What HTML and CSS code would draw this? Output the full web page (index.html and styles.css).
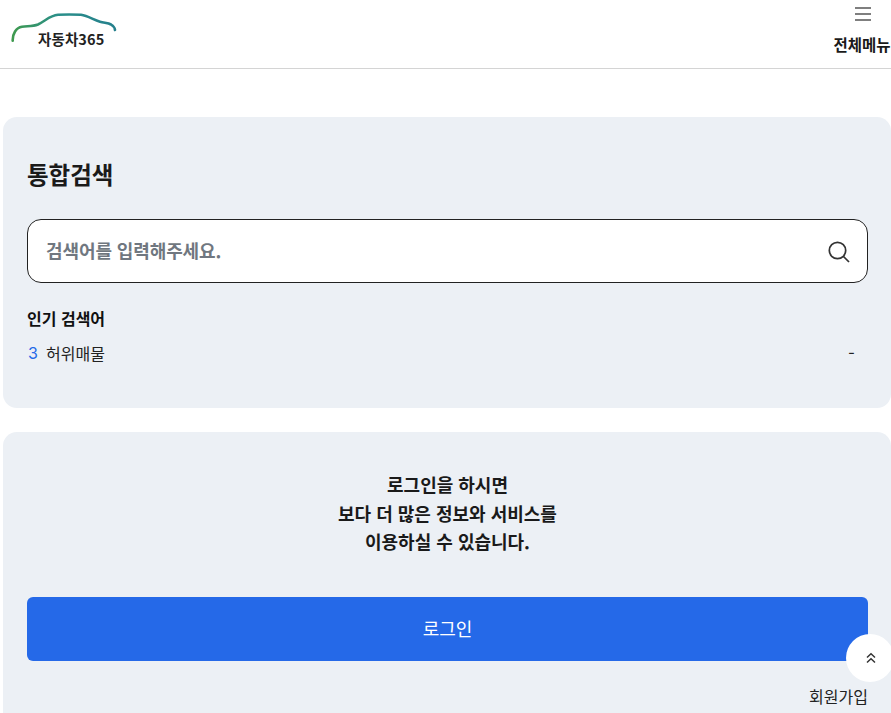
FILE: index.html
```html
<!DOCTYPE html>
<html lang="ko">
<head>
<meta charset="utf-8">
<title>자동차365</title>
<link rel="stylesheet" href="styles.css">
</head>
<body>
<header class="header">
  <a class="logo">
    <svg class="logo-car" width="108" height="32" viewBox="0 0 108 32" fill="none">
      <defs><linearGradient id="g" x1="0" x2="1" y1="0" y2="0"><stop offset="0" stop-color="#3f9a4f"/><stop offset=".45" stop-color="#2a8f8a"/><stop offset="1" stop-color="#25808c"/></linearGradient></defs>
      <path d="M2.700 27.700C2.500 21 6 14.500 12 13.700C19 13 23 13.500 28 11.500C36 7.500 40 2.500 48 1.800C54 1.400 64 1.400 71 1.800C78 3 83 6.500 90 8.700C94 10 98 9.800 101 11.500C103.500 13 104.800 15 105 17" stroke="url(#g)" stroke-width="2.600" stroke-linecap="round"/>
    </svg>
    <span class="logo-text">자동차365</span>
  </a>
  <button class="menu-btn">
    <svg class="menu-icon" width="16" height="14" viewBox="0 0 16 14"><path d="M0 1h16M0 7h16M0 13h16" stroke="#555" stroke-width="1.400"/></svg>
    <span class="menu-label">전체메뉴</span>
  </button>
</header>
<main class="main">
  <section class="card search-card">
    <h2 class="title">통합검색</h2>
    <div class="search-box">
      <span class="placeholder">검색어를 입력해주세요.</span>
      <svg class="search-icon" width="24" height="24" viewBox="0 0 24 24" fill="none"><circle cx="10.500" cy="10.500" r="8.200" stroke="#333" stroke-width="1.700"/><path d="M16.500 16.500L22 22" stroke="#333" stroke-width="1.700"/></svg>
    </div>
    <h3 class="popular-title">인기 검색어</h3>
    <div class="popular-row">
      <span class="rank">3</span>
      <span class="keyword">허위매물</span>
      <span class="dash">-</span>
    </div>
  </section>
  <section class="card login-card">
    <p class="login-msg">로그인을 하시면<br>보다 더 많은 정보와 서비스를<br>이용하실 수 있습니다.</p>
    <button class="login-btn">로그인</button>
    <div class="join"><a>회원가입</a></div>
  </section>
</main>
<button class="top-btn">
  <svg width="12" height="12" viewBox="0 0 12 12" fill="none"><path d="M2 5.500L6 1.800L10 5.500M2 10.500L6 6.800L10 10.500" stroke="#333" stroke-width="1.500"/></svg>
</button>
</body>
</html>
```
FILE: styles.css
```css
* { box-sizing: border-box; }
html, body { margin: 0; padding: 0; height: 713px; overflow: hidden; }
body { font-family: "Noto Sans CJK KR", "Noto Sans", sans-serif; background: #fff; color: #1a1a1a; }
.header { height: 69px; border-bottom: 1px solid #d4d4d4; display: flex; justify-content: space-between; position: relative; }
.logo { position: relative; display: block; width: 120px; }
.logo-car { position: absolute; left: 10px; top: 13px; }
.logo-text { position: absolute; left: 38px; top: 29px; font-size: 14.500px; line-height: 20px; font-weight: 700; color: #222; letter-spacing: .1px; white-space: nowrap; }
.menu-btn { border: 0; background: none; padding: 0; width: 58px; display: flex; flex-direction: column; align-items: center; font-family: inherit; overflow: visible; }
.menu-icon { margin: 7px 0 0 2px; }
.menu-label { margin-top: 12px; font-size: 15.500px; line-height: 22px; font-weight: 700; color: #1a1a1a; white-space: nowrap; }
.main { padding: 48px 0 0 3px; }
.card { background: #ecf0f5; border-radius: 14px; padding: 0 24px; width: 888px; }
.search-card { height: 291px; padding-top: 40px; }
.title { margin: 0; font-size: 23.500px; line-height: 35px; font-weight: 700; color: #1a1a1a; }
.search-box { margin-top: 27px; height: 64px; width: 841px; background: #fff; border: 1px solid #222; border-radius: 14px; display: flex; align-items: center; justify-content: space-between; padding: 0 16px 0 18px; }
.search-icon { margin-top: 1px; }
.placeholder { font-size: 18px; line-height: 26px; font-weight: 600; letter-spacing: -.1px; color: #707780; padding-bottom: 3px; }
.popular-title { margin: 23px 0 0; font-size: 16px; line-height: 24px; font-weight: 700; color: #111; }
.popular-row { margin-top: 11px; width: 841px; display: flex; align-items: center; font-size: 16px; line-height: 24px; color: #222; }
.rank { color: #2569e8; width: 19px; padding-left: 1px; font-family: "Inter", sans-serif; font-size: 16px; }
.keyword { flex: 1; }
.dash { margin-right: 13px; width: 7px; text-align: center; font-family: "Inter", sans-serif; font-size: 15px; }
.login-card { margin-top: 24px; height: 300px; padding-top: 38px; }
.login-msg { margin: 0; text-align: center; font-size: 18px; line-height: 28.500px; font-weight: 700; color: #1a1a1a; width: 841px; }
.login-btn { display: block; margin-top: 41.400px; width: 841px; height: 64px; border: 0; border-radius: 6px; background: #2569e8; color: #fff; font-family: inherit; font-size: 18px; font-weight: 400; padding: 0 0 2px; }
.join { width: 841px; text-align: right; margin-top: 23px; font-size: 16px; line-height: 24px; color: #222; }
.top-btn { position: fixed; left: 846px; top: 634px; width: 48px; height: 48px; border-radius: 50%; border: 0; background: #fff; display: flex; align-items: center; justify-content: center; padding: 0 0 0 2px; }
```
